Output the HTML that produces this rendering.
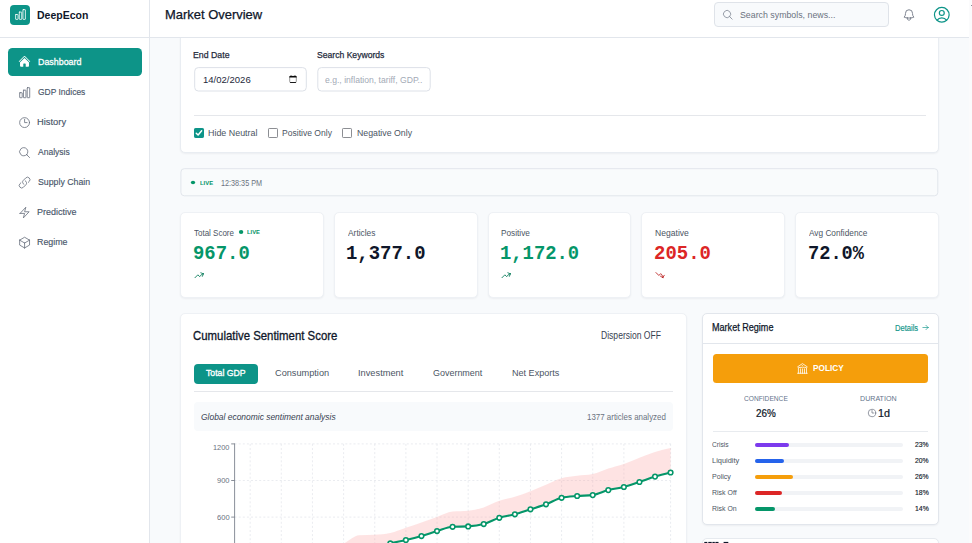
<!DOCTYPE html>
<html><head><meta charset="utf-8"><title>DeepEcon</title>
<style>
html,body{margin:0;padding:0;background:#f8fafc;}
body{width:972px;height:543px;overflow:hidden;position:relative;font-family:"Liberation Sans",sans-serif;}
#app{position:absolute;left:0;top:0;width:972px;height:543px;overflow:hidden;background:#f8fafc;}
#app div,#app span,#app svg{position:absolute;box-sizing:border-box;}
.t{white-space:nowrap;line-height:1;transform-origin:0 50%;display:block;}
.i{overflow:visible;display:block;}
.card{background:#fff;border:1px solid #eef1f5;border-radius:5px;box-shadow:0 1px 2px rgba(15,23,42,.05);}
.trk{left:754.9px;width:147.9px;height:4px;border-radius:2px;background:#f1f3f6;}
.fil{left:754.9px;height:4px;border-radius:2px;}
.cb{width:9.8px;height:9.8px;top:128px;border-radius:1.2px;background:#fff;border:1px solid #8c8e93;}
</style></head><body><div id="app">

<!-- main content cards -->
<div class="card" style="left:180px;top:20px;width:759px;height:133px;border-color:#e9edf2"></div>
<div style="left:194px;top:114.6px;width:731.8px;height:1px;background:#e5e7eb"></div>
<svg class="i" style="left:0;top:0" width="972" height="543" viewBox="0 0 972 543"><g fill="#fff" stroke="#dde1e8" stroke-width="1"><rect x="194.7" y="67.6" width="111.6" height="23.4" rx="3.6"/><rect x="317.8" y="67.6" width="112.4" height="23.4" rx="3.6"/></g></svg>
<svg class="i" style="left:0;top:0" width="972" height="543" viewBox="0 0 972 543"><rect x="289.7" y="76.3" width="6.6" height="6.2" rx="1" fill="none" stroke="#8d8d8d" stroke-width="0.9"/><path d="M289.25 77.55v-.75a.9.9 0 0 1 .9-.9h.35v-.3h1.1v.3h2.8v-.3h1.1v.3h.35a.9.9 0 0 1 .9.9v.75z" fill="#0a0a0a"/><rect x="289.9" y="82.05" width="6.2" height="0.9" rx="0.4" fill="#1a1a1a"/></svg>
<div class="cb" style="left:194px;background:#0d9488;border-color:#0d9488"></div>
<svg class="i" style="left:194px;top:128px" width="9.8" height="9.8" viewBox="0 0 10 10" fill="none" stroke="#fff" stroke-width="1.5" stroke-linecap="round" stroke-linejoin="round"><path d="M2.3 5.3 4.2 7.2 7.8 2.9"/></svg>
<div class="cb" style="left:268.1px"></div>
<div class="cb" style="left:342.4px"></div>

<!-- live bar -->
<svg class="i" style="left:0;top:0" width="972" height="543" viewBox="0 0 972 543"><rect x="180.9" y="168.7" width="756.9" height="27.1" rx="3.4" fill="#f9fbfc" stroke="#e2e6ec" stroke-width="1"/></svg>


<div class="card" style="left:180px;top:212px;width:144px;height:86px"></div><div class="card" style="left:334px;top:212px;width:144px;height:86px"></div><div class="card" style="left:488px;top:212px;width:143px;height:86px"></div><div class="card" style="left:641px;top:212px;width:144px;height:86px"></div><div class="card" style="left:795px;top:212px;width:144px;height:86px"></div>
<svg class="i" style="left:0;top:0" width="972" height="543" viewBox="0 0 972 543"><ellipse cx="193" cy="182.4" rx="2.15" ry="1.75" fill="#059669"/><ellipse cx="241.1" cy="232" rx="2.2" ry="2.1" fill="#059669"/></svg>


<!-- chart card -->
<div class="card" style="left:180px;top:313px;width:507px;height:260px"></div>
<div style="left:193.8px;top:363.9px;width:64px;height:19.9px;background:#0d9488;border-radius:4px"></div>
<div style="left:193.8px;top:390.9px;width:478.9px;height:1px;background:#e5e7eb"></div>
<div style="left:193.8px;top:402.1px;width:478.9px;height:28.5px;background:#f8fafc;border-radius:4px"></div>
<svg class="i" style="left:0;top:0" width="972" height="543" viewBox="0 0 972 543">
<g stroke="#e3e6eb" stroke-width="0.75" stroke-dasharray="2 2.1" fill="none"><line x1="234.6" y1="443.9" x2="670.8" y2="443.9"/><line x1="234.6" y1="480.5" x2="670.8" y2="480.5"/><line x1="234.6" y1="517.1" x2="670.8" y2="517.1"/><line x1="250.17" y1="443.9" x2="250.17" y2="560"/><line x1="281.31" y1="443.9" x2="281.31" y2="560"/><line x1="312.45" y1="443.9" x2="312.45" y2="560"/><line x1="343.60" y1="443.9" x2="343.60" y2="560"/><line x1="374.74" y1="443.9" x2="374.74" y2="560"/><line x1="405.88" y1="443.9" x2="405.88" y2="560"/><line x1="437.02" y1="443.9" x2="437.02" y2="560"/><line x1="468.16" y1="443.9" x2="468.16" y2="560"/><line x1="499.31" y1="443.9" x2="499.31" y2="560"/><line x1="530.45" y1="443.9" x2="530.45" y2="560"/><line x1="561.59" y1="443.9" x2="561.59" y2="560"/><line x1="592.73" y1="443.9" x2="592.73" y2="560"/><line x1="623.88" y1="443.9" x2="623.88" y2="560"/><line x1="670.59" y1="443.9" x2="670.59" y2="560"/></g>
<path d="M234.60,585.00C239.79,583.33 244.98,581.67 250.17,580.00C255.36,578.33 260.55,577.00 265.74,575.00C270.93,573.00 276.12,570.17 281.31,568.00C286.50,565.83 291.69,564.17 296.88,562.00C302.07,559.83 307.26,557.17 312.45,555.00C317.65,552.83 322.84,550.92 328.03,549.00C333.22,547.08 338.41,545.78 343.60,543.50C348.79,541.22 353.98,535.70 359.17,535.30C364.36,534.90 369.55,535.08 374.74,534.70C379.93,534.32 385.12,534.13 390.31,533.00C395.50,531.87 400.69,529.53 405.88,527.80C411.07,526.07 416.26,524.40 421.45,522.60C426.64,520.80 431.83,518.83 437.02,517.00C442.21,515.17 447.40,512.20 452.59,511.60C457.78,511.00 462.97,511.30 468.16,510.70C473.36,510.10 478.55,509.05 483.74,507.40C488.93,505.75 494.12,502.57 499.31,500.80C504.50,499.03 509.69,498.40 514.88,496.80C520.07,495.20 525.26,493.22 530.45,491.20C535.64,489.18 540.83,486.85 546.02,484.70C551.21,482.55 556.40,479.78 561.59,478.30C566.78,476.82 571.97,476.50 577.16,475.80C582.35,475.10 587.54,475.23 592.73,474.10C597.92,472.97 603.11,470.20 608.30,468.50C613.49,466.80 618.68,465.70 623.88,463.90C629.07,462.10 634.26,459.70 639.45,457.70C644.64,455.70 649.83,453.53 655.02,451.90C660.21,450.27 665.40,449.08 670.59,447.90L670.59,472.50L655.02,476.60L639.45,482.00L623.88,487.00L608.30,490.10L592.73,495.10L577.16,496.00L561.59,497.80L546.02,504.30L530.45,509.30L514.88,514.30L499.31,517.80L483.74,524.10L468.16,526.40L452.59,526.80L437.02,531.10L421.45,536.10L405.88,540.10L390.31,543.40L374.74,548.00L359.17,553.00L343.60,558.00L328.03,565.00L312.45,570.00L296.88,575.00L281.31,579.00L265.74,584.00L250.17,588.00L234.60,591.50Z" fill="#fca5a5" fill-opacity="0.31" stroke="none"/>
<g stroke="#757b87" stroke-width="0.85" fill="none"><line x1="234.6" y1="443.4" x2="234.6" y2="560"/><line x1="231.2" y1="443.9" x2="234.6" y2="443.9"/><line x1="231.2" y1="480.5" x2="234.6" y2="480.5"/><line x1="231.2" y1="517.1" x2="234.6" y2="517.1"/></g>
<path d="M234.60,591.50C239.79,590.38 244.98,589.25 250.17,588.00C255.36,586.75 260.55,585.50 265.74,584.00C270.93,582.50 276.12,580.50 281.31,579.00C286.50,577.50 291.69,576.50 296.88,575.00C302.07,573.50 307.26,571.67 312.45,570.00C317.65,568.33 322.84,567.00 328.03,565.00C333.22,563.00 338.41,560.00 343.60,558.00C348.79,556.00 353.98,554.67 359.17,553.00C364.36,551.33 369.55,549.60 374.74,548.00C379.93,546.40 385.12,544.72 390.31,543.40C395.50,542.08 400.69,541.32 405.88,540.10C411.07,538.88 416.26,537.60 421.45,536.10C426.64,534.60 431.83,532.65 437.02,531.10C442.21,529.55 447.40,527.07 452.59,526.80C457.78,526.53 462.97,526.67 468.16,526.40C473.36,526.13 478.55,525.53 483.74,524.10C488.93,522.67 494.12,519.43 499.31,517.80C504.50,516.17 509.69,515.72 514.88,514.30C520.07,512.88 525.26,510.97 530.45,509.30C535.64,507.63 540.83,506.22 546.02,504.30C551.21,502.38 556.40,499.00 561.59,497.80C566.78,496.60 571.97,496.45 577.16,496.00C582.35,495.55 587.54,495.70 592.73,495.10C597.92,494.50 603.11,491.45 608.30,490.10C613.49,488.75 618.68,488.35 623.88,487.00C629.07,485.65 634.26,483.73 639.45,482.00C644.64,480.27 649.83,478.18 655.02,476.60C660.21,475.02 665.40,473.76 670.59,472.50" fill="none" stroke="#059669" stroke-width="2.1" stroke-linejoin="round"/>
<g fill="#ffffff" stroke="#059669" stroke-width="1.55"><circle cx="234.60" cy="591.50" r="2.3"/><circle cx="250.17" cy="588.00" r="2.3"/><circle cx="265.74" cy="584.00" r="2.3"/><circle cx="281.31" cy="579.00" r="2.3"/><circle cx="296.88" cy="575.00" r="2.3"/><circle cx="312.45" cy="570.00" r="2.3"/><circle cx="328.03" cy="565.00" r="2.3"/><circle cx="343.60" cy="558.00" r="2.3"/><circle cx="359.17" cy="553.00" r="2.3"/><circle cx="374.74" cy="548.00" r="2.3"/><circle cx="390.31" cy="543.40" r="2.3"/><circle cx="405.88" cy="540.10" r="2.3"/><circle cx="421.45" cy="536.10" r="2.3"/><circle cx="437.02" cy="531.10" r="2.3"/><circle cx="452.59" cy="526.80" r="2.3"/><circle cx="468.16" cy="526.40" r="2.3"/><circle cx="483.74" cy="524.10" r="2.3"/><circle cx="499.31" cy="517.80" r="2.3"/><circle cx="514.88" cy="514.30" r="2.3"/><circle cx="530.45" cy="509.30" r="2.3"/><circle cx="546.02" cy="504.30" r="2.3"/><circle cx="561.59" cy="497.80" r="2.3"/><circle cx="577.16" cy="496.00" r="2.3"/><circle cx="592.73" cy="495.10" r="2.3"/><circle cx="608.30" cy="490.10" r="2.3"/><circle cx="623.88" cy="487.00" r="2.3"/><circle cx="639.45" cy="482.00" r="2.3"/><circle cx="655.02" cy="476.60" r="2.3"/><circle cx="670.59" cy="472.50" r="2.3"/></g>
</svg>

<!-- regime card -->
<div class="card" style="left:702px;top:313px;width:237px;height:212px;border-color:#e2e6ec"></div>
<div style="left:703px;top:343.2px;width:235px;height:1px;background:#e2e6ec"></div>
<div style="left:713px;top:353.9px;width:215px;height:28.8px;background:#f59e0b;border-radius:3.5px"></div>
<div style="left:713px;top:431px;width:215px;height:1px;background:#e8ebef"></div>
<div class="trk" style="top:443.0px"></div><div class="fil" style="top:443.0px;width:34.2px;background:#7c3aed"></div><div class="trk" style="top:459.0px"></div><div class="fil" style="top:459.0px;width:29.1px;background:#2563eb"></div><div class="trk" style="top:475.0px"></div><div class="fil" style="top:475.0px;width:38.1px;background:#f59e0b"></div><div class="trk" style="top:491.0px"></div><div class="fil" style="top:491.0px;width:27.0px;background:#dc2626"></div><div class="trk" style="top:507.0px"></div><div class="fil" style="top:507.0px;width:20.1px;background:#059669"></div>
<div class="card" style="left:702px;top:538px;width:237px;height:40px;border-color:#e6eaef"></div>
<svg class="i" style="left:0;top:0" width="972" height="543" viewBox="0 0 972 543"><g fill="#0f172a"><rect x="704.3" y="541.9" width="3" height="2"/><rect x="708.3" y="541.9" width="3.4" height="2"/><rect x="712.4" y="541.9" width="2.4" height="2"/><rect x="715.4" y="541.9" width="3.1" height="2"/><rect x="723.6" y="541.9" width="4.7" height="2"/></g></svg>

<!-- scrollbar strip -->
<div style="left:969px;top:0;width:3px;height:543px;background:#fbfbfc"></div>
<div style="left:970.6px;top:4.6px;width:1.4px;height:1.6px;background:#8a8f98"></div>

<!-- header -->
<div style="left:150px;top:0;width:819px;height:38px;background:#fff;border-bottom:1px solid #e2e6ec"></div>
<div style="left:714.2px;top:2.2px;width:174.6px;height:24.5px;background:#f8fafc;border:1px solid #dfe3e9;border-radius:4px"></div>

<!-- sidebar -->
<div style="left:0;top:0;width:150px;height:543px;background:#fff;border-right:1px solid #e2e6ec"></div>
<div style="left:0;top:37px;width:150px;height:1px;background:#e2e6ec"></div>
<div style="left:10px;top:5px;width:19.9px;height:19.8px;background:#0d9488;border-radius:4px"></div>
<div style="left:8px;top:48.1px;width:134px;height:27.8px;background:#0d9488;border-radius:4.5px"></div>

<svg class="i" style="left:13.85px;top:7.95px" width="13.0" height="13.0" viewBox="0 0 24 24" fill="none" stroke="#ffffff" stroke-width="1.5" stroke-linecap="round" stroke-linejoin="round"><path d="M3.6 12h3.3a.6.6 0 0 1 .6.6v7.8a.6.6 0 0 1-.6.6H3.6a.6.6 0 0 1-.6-.6v-7.8a.6.6 0 0 1 .6-.6ZM10.35 7.5h3.3a.6.6 0 0 1 .6.6v12.3a.6.6 0 0 1-.6.6h-3.3a.6.6 0 0 1-.6-.6V8.1a.6.6 0 0 1 .6-.6ZM17.1 3h3.3a.6.6 0 0 1 .6.6v16.8a.6.6 0 0 1-.6.6h-3.3a.6.6 0 0 1-.6-.6V3.6a.6.6 0 0 1 .6-.6Z"/></svg><svg class="i" style="left:17.8px;top:55.45px" width="13" height="13" viewBox="0 0 24 24" fill="#fff"><path d="M11.47 3.841a.75.75 0 0 1 1.06 0l8.69 8.69a.75.75 0 1 0 1.06-1.061l-8.689-8.69a2.25 2.25 0 0 0-3.182 0l-8.69 8.69a.75.75 0 1 0 1.061 1.06l8.69-8.689Z"/><path d="m12 5.432 8.159 8.159c.03.03.06.058.091.086v6.198c0 1.035-.84 1.875-1.875 1.875H15a.75.75 0 0 1-.75-.75v-4.5a.75.75 0 0 0-.75-.75h-3a.75.75 0 0 0-.75.75V21a.75.75 0 0 1-.75.75H5.625a1.875 1.875 0 0 1-1.875-1.875v-6.198a2.29 2.29 0 0 0 .091-.086L12 5.432Z"/></svg><svg class="i" style="left:17.80px;top:85.60px" width="13.4" height="13.4" viewBox="0 0 24 24" fill="none" stroke="#6b7280" stroke-width="1.5" stroke-linecap="round" stroke-linejoin="round"><path d="M3.6 12h3.3a.6.6 0 0 1 .6.6v7.8a.6.6 0 0 1-.6.6H3.6a.6.6 0 0 1-.6-.6v-7.8a.6.6 0 0 1 .6-.6ZM10.35 7.5h3.3a.6.6 0 0 1 .6.6v12.3a.6.6 0 0 1-.6.6h-3.3a.6.6 0 0 1-.6-.6V8.1a.6.6 0 0 1 .6-.6ZM17.1 3h3.3a.6.6 0 0 1 .6.6v16.8a.6.6 0 0 1-.6.6h-3.3a.6.6 0 0 1-.6-.6V3.6a.6.6 0 0 1 .6-.6Z"/></svg><svg class="i" style="left:17.80px;top:115.70px" width="13.2" height="13.2" viewBox="0 0 24 24" fill="none" stroke="#6b7280" stroke-width="1.5" stroke-linecap="round" stroke-linejoin="round"><path d="M12 6v6h4.5m4.5 0a9 9 0 1 1-18 0 9 9 0 0 1 18 0Z"/></svg><svg class="i" style="left:17.80px;top:145.70px" width="13.2" height="13.2" viewBox="0 0 24 24" fill="none" stroke="#6b7280" stroke-width="1.5" stroke-linecap="round" stroke-linejoin="round"><path d="m21 21-5.197-5.197m0 0A7.5 7.5 0 1 0 5.196 5.196a7.5 7.5 0 0 0 10.607 10.607Z"/></svg><svg class="i" style="left:17.80px;top:175.70px" width="13.2" height="13.2" viewBox="0 0 24 24" fill="none" stroke="#6b7280" stroke-width="1.5" stroke-linecap="round" stroke-linejoin="round"><path d="M13.19 8.688a4.5 4.5 0 0 1 1.242 7.244l-4.5 4.5a4.5 4.5 0 0 1-6.364-6.364l1.757-1.757m13.35-.622 1.757-1.757a4.5 4.5 0 0 0-6.364-6.364l-4.5 4.5a4.5 4.5 0 0 0 1.242 7.244"/></svg><svg class="i" style="left:17.80px;top:205.70px" width="13.2" height="13.2" viewBox="0 0 24 24" fill="none" stroke="#6b7280" stroke-width="1.5" stroke-linecap="round" stroke-linejoin="round"><path d="m3.75 13.5 10.5-11.25L12 10.5h8.25L9.75 21.75 12 13.5H3.75Z"/></svg><svg class="i" style="left:17.80px;top:235.70px" width="13.2" height="13.2" viewBox="0 0 24 24" fill="none" stroke="#6b7280" stroke-width="1.5" stroke-linecap="round" stroke-linejoin="round"><path d="m21 7.5-9-5.25L3 7.5m18 0-9 5.25m9-5.25v9l-9 5.25M3 7.5l9 5.25M3 7.5v9l9 5.25m0-9v9"/></svg><svg class="i" style="left:721.80px;top:9.30px" width="11.6" height="11.6" viewBox="0 0 24 24" fill="none" stroke="#8e95a1" stroke-width="1.9" stroke-linecap="round" stroke-linejoin="round"><path d="m21 21-5.197-5.197m0 0A7.5 7.5 0 1 0 5.196 5.196a7.5 7.5 0 0 0 10.607 10.607Z"/></svg><svg class="i" style="left:902.00px;top:8.00px" width="14.0" height="14.0" viewBox="0 0 24 24" fill="none" stroke="#6b7280" stroke-width="1.5" stroke-linecap="round" stroke-linejoin="round"><path d="M14.857 17.082a23.848 23.848 0 0 0 5.454-1.31A8.967 8.967 0 0 1 18 9.75V9A6 6 0 0 0 6 9v.75a8.967 8.967 0 0 1-2.312 6.022c1.733.64 3.56 1.085 5.455 1.31m5.714 0a24.255 24.255 0 0 1-5.714 0m5.714 0a3 3 0 1 1-5.714 0"/></svg><svg class="i" style="left:932.30px;top:5.20px" width="19.6" height="19.6" viewBox="0 0 24 24" fill="none" stroke="#0d9488" stroke-width="1.5" stroke-linecap="round" stroke-linejoin="round"><path d="M17.982 18.725A7.488 7.488 0 0 0 12 15.75a7.488 7.488 0 0 0-5.982 2.975m11.963 0a9 9 0 1 0-11.963 0m11.963 0A8.966 8.966 0 0 1 12 21a8.966 8.966 0 0 1-5.982-2.275M15 9.75a3 3 0 1 1-6 0 3 3 0 0 1 6 0Z"/></svg><svg class="i" style="left:193.75px;top:269.70px" width="10.3" height="10.3" viewBox="0 0 24 24" fill="none" stroke="#047857" stroke-width="2.0" stroke-linecap="round" stroke-linejoin="round"><path d="M2.25 18 9 11.25l4.306 4.306a11.95 11.95 0 0 1 5.814-5.518l2.74-1.22m0 0-5.94-2.281m5.94 2.28-2.28 5.941"/></svg><svg class="i" style="left:501.25px;top:269.70px" width="10.3" height="10.3" viewBox="0 0 24 24" fill="none" stroke="#047857" stroke-width="2.0" stroke-linecap="round" stroke-linejoin="round"><path d="M2.25 18 9 11.25l4.306 4.306a11.95 11.95 0 0 1 5.814-5.518l2.74-1.22m0 0-5.94-2.281m5.94 2.28-2.28 5.941"/></svg><svg class="i" style="left:654.75px;top:269.80px" width="10.3" height="10.3" viewBox="0 0 24 24" fill="none" stroke="#b91c1c" stroke-width="2.0" stroke-linecap="round" stroke-linejoin="round"><path d="M2.25 6 9 12.75l4.286-4.286a11.948 11.948 0 0 1 4.306 6.43l.776 2.898m0 0 3.182-5.511m-3.182 5.51-5.511-3.181"/></svg><svg class="i" style="left:795.60px;top:361.95px" width="12.9" height="12.9" viewBox="0 0 24 24" fill="none" stroke="#ffffff" stroke-width="1.5" stroke-linecap="round" stroke-linejoin="round"><path d="M12 21v-8.25M15.75 21v-8.25M8.25 21v-8.25M3 9l9-6 9 6m-1.5 12V10.332A48.36 48.36 0 0 0 12 9.75c-2.551 0-5.056.2-7.5.582V21M3 21h18M12 6.75h.008v.008H12V6.75Z"/></svg><svg class="i" style="left:921.50px;top:324.20px" width="7.0" height="7.0" viewBox="0 0 24 24" fill="none" stroke="#0d9488" stroke-width="2.2" stroke-linecap="round" stroke-linejoin="round"><path d="M13.5 4.5 21 12m0 0-7.5 7.5M21 12H3"/></svg><svg class="i" style="left:866.80px;top:407.60px" width="10.0" height="10.0" viewBox="0 0 24 24" fill="none" stroke="#6b7280" stroke-width="1.7" stroke-linecap="round" stroke-linejoin="round"><path d="M12 6v6h4.5m4.5 0a9 9 0 1 1-18 0 9 9 0 0 1 18 0Z"/></svg>
<span class="t" id="t0" style="left:37.27px;top:9.00px;font-size:11.6px;color:#0f172a;font-weight:700;font-family:'Liberation Sans', sans-serif;transform:scaleX(0.9053);">DeepEcon</span>
<span class="t" id="t1" style="left:164.64px;top:9.00px;font-size:12.2px;color:#0f172a;font-weight:500;font-family:'Liberation Sans', sans-serif;transform:scaleX(1.0628);-webkit-text-stroke:0.25px #0f172a;">Market Overview</span>
<span class="t" id="t2" style="left:739.84px;top:10.00px;font-size:9.8px;color:#6b7280;font-weight:400;font-family:'Liberation Sans', sans-serif;transform:scaleX(0.8982);">Search symbols, news...</span>
<span class="t" id="t3" style="left:37.68px;top:57.00px;font-size:9.9px;color:#ffffff;font-weight:400;font-family:'Liberation Sans', sans-serif;transform:scaleX(0.8995);-webkit-text-stroke:0.3px #fff;">Dashboard</span>
<span class="t" id="t4" style="left:37.71px;top:87.00px;font-size:9.9px;color:#475569;font-weight:400;font-family:'Liberation Sans', sans-serif;transform:scaleX(0.8564);-webkit-text-stroke:0.15px #475569;">GDP Indices</span>
<span class="t" id="t5" style="left:37.29px;top:117.00px;font-size:9.9px;color:#475569;font-weight:400;font-family:'Liberation Sans', sans-serif;transform:scaleX(0.9467);-webkit-text-stroke:0.15px #475569;">History</span>
<span class="t" id="t6" style="left:38.05px;top:147.00px;font-size:9.9px;color:#475569;font-weight:400;font-family:'Liberation Sans', sans-serif;transform:scaleX(0.8641);-webkit-text-stroke:0.15px #475569;">Analysis</span>
<span class="t" id="t7" style="left:37.70px;top:177.00px;font-size:9.9px;color:#475569;font-weight:400;font-family:'Liberation Sans', sans-serif;transform:scaleX(0.8872);-webkit-text-stroke:0.15px #475569;">Supply Chain</span>
<span class="t" id="t8" style="left:37.32px;top:207.00px;font-size:9.9px;color:#475569;font-weight:400;font-family:'Liberation Sans', sans-serif;transform:scaleX(0.9098);-webkit-text-stroke:0.15px #475569;">Predictive</span>
<span class="t" id="t9" style="left:37.33px;top:237.00px;font-size:9.9px;color:#475569;font-weight:400;font-family:'Liberation Sans', sans-serif;transform:scaleX(0.8980);-webkit-text-stroke:0.15px #475569;">Regime</span>
<span class="t" id="t10" style="left:193.18px;top:50.00px;font-size:9.8px;color:#1e293b;font-weight:400;font-family:'Liberation Sans', sans-serif;transform:scaleX(0.8940);-webkit-text-stroke:0.25px #1e293b;">End Date</span>
<span class="t" id="t11" style="left:317.15px;top:50.00px;font-size:9.8px;color:#1e293b;font-weight:400;font-family:'Liberation Sans', sans-serif;transform:scaleX(0.8778);-webkit-text-stroke:0.25px #1e293b;">Search Keywords</span>
<span class="t" id="t12" style="left:202.62px;top:75.00px;font-size:9.8px;color:#1e293b;font-weight:400;font-family:'Liberation Sans', sans-serif;transform:scaleX(0.9730);">14/02/2026</span>
<span class="t" id="t13" style="left:325.44px;top:75.00px;font-size:9.7px;color:#a3aab6;font-weight:400;font-family:'Liberation Sans', sans-serif;transform:scaleX(0.8890);">e.g., inflation, tariff, GDP..</span>
<span class="t" id="t14" style="left:208.26px;top:128.00px;font-size:9.7px;color:#4b5563;font-weight:400;font-family:'Liberation Sans', sans-serif;transform:scaleX(0.9191);">Hide Neutral</span>
<span class="t" id="t15" style="left:282.08px;top:128.00px;font-size:9.7px;color:#4b5563;font-weight:400;font-family:'Liberation Sans', sans-serif;transform:scaleX(0.8829);">Positive Only</span>
<span class="t" id="t16" style="left:356.97px;top:128.00px;font-size:9.7px;color:#4b5563;font-weight:400;font-family:'Liberation Sans', sans-serif;transform:scaleX(0.9042);">Negative Only</span>
<span class="t" id="t17" style="left:199.60px;top:181.00px;font-size:5.8px;color:#059669;font-weight:700;font-family:'Liberation Sans', sans-serif;transform:scaleX(1.0143);">LIVE</span>
<span class="t" id="t18" style="left:220.78px;top:179.00px;font-size:8.4px;color:#6b7280;font-weight:400;font-family:'Liberation Sans', sans-serif;transform:scaleX(0.8636);">12:38:35 PM</span>
<span class="t" id="t19" style="left:193.91px;top:229.00px;font-size:8.6px;color:#4b5563;font-weight:400;font-family:'Liberation Sans', sans-serif;transform:scaleX(0.9287);">Total Score</span>
<span class="t" id="t20" style="left:192.96px;top:244.00px;font-size:20.0px;color:#059669;font-weight:700;font-family:'Liberation Mono', monospace;transform:scaleX(0.9462);">967.0</span>
<span class="t" id="t21" style="left:347.50px;top:229.00px;font-size:8.6px;color:#4b5563;font-weight:400;font-family:'Liberation Sans', sans-serif;transform:scaleX(0.9751);">Articles</span>
<span class="t" id="t22" style="left:346.27px;top:244.00px;font-size:20.0px;color:#0f172a;font-weight:700;font-family:'Liberation Mono', monospace;transform:scaleX(0.9472);">1,377.0</span>
<span class="t" id="t23" style="left:500.93px;top:229.00px;font-size:8.6px;color:#4b5563;font-weight:400;font-family:'Liberation Sans', sans-serif;transform:scaleX(0.9612);">Positive</span>
<span class="t" id="t24" style="left:500.38px;top:244.00px;font-size:20.0px;color:#059669;font-weight:700;font-family:'Liberation Mono', monospace;transform:scaleX(0.9423);">1,172.0</span>
<span class="t" id="t25" style="left:654.60px;top:229.00px;font-size:8.6px;color:#4b5563;font-weight:400;font-family:'Liberation Sans', sans-serif;transform:scaleX(0.9982);">Negative</span>
<span class="t" id="t26" style="left:654.16px;top:244.00px;font-size:20.0px;color:#dc2626;font-weight:700;font-family:'Liberation Mono', monospace;transform:scaleX(0.9479);">205.0</span>
<span class="t" id="t27" style="left:809.00px;top:229.00px;font-size:8.6px;color:#4b5563;font-weight:400;font-family:'Liberation Sans', sans-serif;transform:scaleX(0.9622);">Avg Confidence</span>
<span class="t" id="t28" style="left:807.88px;top:244.00px;font-size:20.0px;color:#0f172a;font-weight:700;font-family:'Liberation Mono', monospace;transform:scaleX(0.9337);">72.0%</span>
<span class="t" id="t29" style="left:246.50px;top:230.00px;font-size:5.8px;color:#059669;font-weight:700;font-family:'Liberation Sans', sans-serif;transform:scaleX(1.0062);">LIVE</span>
<span class="t" id="t30" style="left:193.24px;top:330.00px;font-size:12.2px;color:#0f172a;font-weight:500;font-family:'Liberation Sans', sans-serif;transform:scaleX(0.9347);-webkit-text-stroke:0.3px #0f172a;">Cumulative Sentiment Score</span>
<span class="t" id="t31" style="left:600.62px;top:331.00px;font-size:10.0px;color:#374151;font-weight:400;font-family:'Liberation Sans', sans-serif;transform:scaleX(0.8562);">Dispersion OFF</span>
<span class="t" id="t32" style="left:205.92px;top:368.00px;font-size:9.9px;color:#ffffff;font-weight:400;font-family:'Liberation Sans', sans-serif;transform:scaleX(0.8804);-webkit-text-stroke:0.35px #fff;">Total GDP</span>
<span class="t" id="t33" style="left:274.84px;top:368.00px;font-size:9.9px;color:#4b5563;font-weight:400;font-family:'Liberation Sans', sans-serif;transform:scaleX(0.9297);">Consumption</span>
<span class="t" id="t34" style="left:357.76px;top:368.00px;font-size:9.9px;color:#4b5563;font-weight:400;font-family:'Liberation Sans', sans-serif;transform:scaleX(0.9374);">Investment</span>
<span class="t" id="t35" style="left:432.64px;top:368.00px;font-size:9.9px;color:#4b5563;font-weight:400;font-family:'Liberation Sans', sans-serif;transform:scaleX(0.9070);">Government</span>
<span class="t" id="t36" style="left:512.07px;top:368.00px;font-size:9.9px;color:#4b5563;font-weight:400;font-family:'Liberation Sans', sans-serif;transform:scaleX(0.9176);">Net Exports</span>
<span class="t" id="t37" style="left:201.14px;top:412.00px;font-size:9.4px;color:#374151;font-weight:400;font-family:'Liberation Sans', sans-serif;font-style:italic;transform:scaleX(0.9000);">Global economic sentiment analysis</span>
<span class="t" id="t38" style="left:586.63px;top:413.00px;font-size:8.4px;color:#6b7280;font-weight:400;font-family:'Liberation Sans', sans-serif;transform:scaleX(0.9465);">1377 articles analyzed</span>
<span class="t" id="t39" style="left:213.45px;top:444.00px;font-size:8.0px;color:#6b7280;font-weight:400;font-family:'Liberation Sans', sans-serif;transform:scaleX(0.9205);">1200</span>
<span class="t" id="t40" style="left:217.32px;top:477.00px;font-size:8.0px;color:#6b7280;font-weight:400;font-family:'Liberation Sans', sans-serif;transform:scaleX(0.9376);">900</span>
<span class="t" id="t41" style="left:217.22px;top:514.00px;font-size:8.0px;color:#6b7280;font-weight:400;font-family:'Liberation Sans', sans-serif;transform:scaleX(0.9450);">600</span>
<span class="t" id="t42" style="left:711.77px;top:323.00px;font-size:10.0px;color:#0f172a;font-weight:400;font-family:'Liberation Sans', sans-serif;transform:scaleX(0.9064);-webkit-text-stroke:0.25px #0f172a;">Market Regime</span>
<span class="t" id="t43" style="left:895.07px;top:324.00px;font-size:8.5px;color:#0d9488;font-weight:400;font-family:'Liberation Sans', sans-serif;transform:scaleX(0.8913);-webkit-text-stroke:0.15px #0d9488;">Details</span>
<span class="t" id="t44" style="left:812.99px;top:363.00px;font-size:9.8px;color:#ffffff;font-weight:700;font-family:'Liberation Sans', sans-serif;transform:scaleX(0.8421);">POLICY</span>
<span class="t" id="t45" style="left:743.63px;top:395.00px;font-size:7.4px;color:#64748b;font-weight:400;font-family:'Liberation Sans', sans-serif;transform:scaleX(0.8969);">CONFIDENCE</span>
<span class="t" id="t46" style="left:860.32px;top:395.00px;font-size:7.4px;color:#64748b;font-weight:400;font-family:'Liberation Sans', sans-serif;transform:scaleX(0.9607);">DURATION</span>
<span class="t" id="t47" style="left:755.72px;top:409.00px;font-size:10.3px;color:#0f172a;font-weight:400;font-family:'Liberation Sans', sans-serif;transform:scaleX(0.9617);-webkit-text-stroke:0.22px #0f172a;">26%</span>
<span class="t" id="t48" style="left:878.17px;top:409.00px;font-size:10.3px;color:#0f172a;font-weight:400;font-family:'Liberation Sans', sans-serif;transform:scaleX(1.0466);-webkit-text-stroke:0.22px #0f172a;">1d</span>
<span class="t" id="t49" style="left:712.24px;top:441.00px;font-size:7.8px;color:#4b5563;font-weight:400;font-family:'Liberation Sans', sans-serif;transform:scaleX(0.8528);">Crisis</span>
<span class="t" id="t50" style="left:914.94px;top:441.00px;font-size:7.8px;color:#0f172a;font-weight:400;font-family:'Liberation Sans', sans-serif;transform:scaleX(0.8689);-webkit-text-stroke:0.15px #0f172a;">23%</span>
<span class="t" id="t51" style="left:711.93px;top:457.00px;font-size:7.8px;color:#4b5563;font-weight:400;font-family:'Liberation Sans', sans-serif;transform:scaleX(0.9530);">Liquidity</span>
<span class="t" id="t52" style="left:914.94px;top:457.00px;font-size:7.8px;color:#0f172a;font-weight:400;font-family:'Liberation Sans', sans-serif;transform:scaleX(0.8689);-webkit-text-stroke:0.15px #0f172a;">20%</span>
<span class="t" id="t53" style="left:711.96px;top:473.00px;font-size:7.8px;color:#4b5563;font-weight:400;font-family:'Liberation Sans', sans-serif;transform:scaleX(0.9057);">Policy</span>
<span class="t" id="t54" style="left:914.94px;top:473.00px;font-size:7.8px;color:#0f172a;font-weight:400;font-family:'Liberation Sans', sans-serif;transform:scaleX(0.8689);-webkit-text-stroke:0.15px #0f172a;">26%</span>
<span class="t" id="t55" style="left:711.96px;top:489.00px;font-size:7.8px;color:#4b5563;font-weight:400;font-family:'Liberation Sans', sans-serif;transform:scaleX(0.8954);">Risk Off</span>
<span class="t" id="t56" style="left:914.76px;top:489.00px;font-size:7.8px;color:#0f172a;font-weight:400;font-family:'Liberation Sans', sans-serif;transform:scaleX(0.8806);-webkit-text-stroke:0.15px #0f172a;">18%</span>
<span class="t" id="t57" style="left:711.97px;top:505.00px;font-size:7.8px;color:#4b5563;font-weight:400;font-family:'Liberation Sans', sans-serif;transform:scaleX(0.8876);">Risk On</span>
<span class="t" id="t58" style="left:914.76px;top:505.00px;font-size:7.8px;color:#0f172a;font-weight:400;font-family:'Liberation Sans', sans-serif;transform:scaleX(0.8806);-webkit-text-stroke:0.15px #0f172a;">14%</span>
</div></body></html>
